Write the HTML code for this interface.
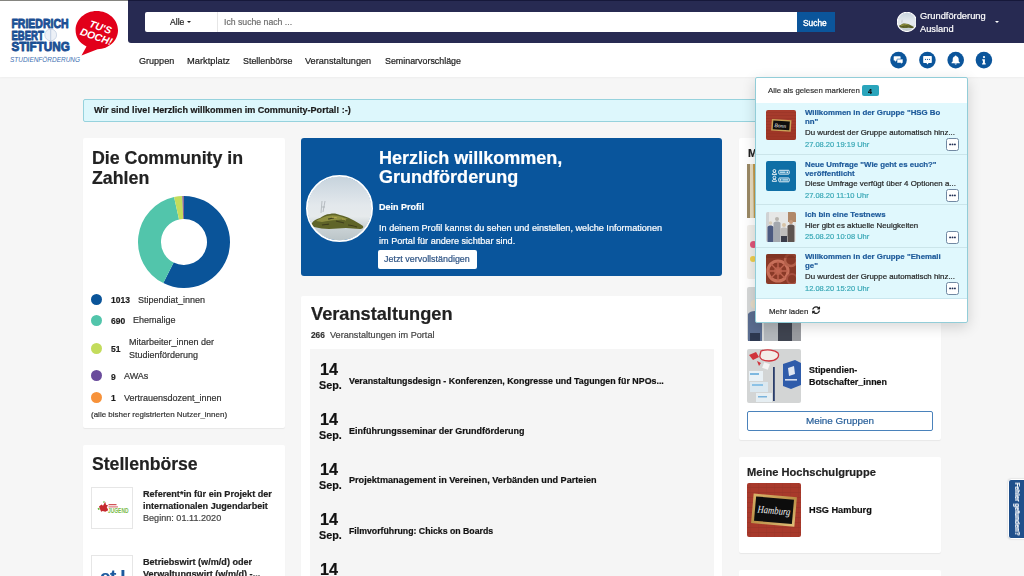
<!DOCTYPE html>
<html><head><meta charset="utf-8"><style>
html,body{margin:0;padding:0}
body{width:1024px;height:576px;overflow:hidden;position:relative;background:#f6f6f6;font-family:"Liberation Sans",sans-serif}
.r{position:absolute}
.t{position:absolute;white-space:nowrap;will-change:transform;-webkit-text-stroke:0.2px currentColor}
</style></head><body>
<div class="r" style="left:0px;top:0px;width:1024px;height:77px;background:#fff;box-shadow:0 1px 2px rgba(0,0,0,.035)"></div>
<div class="r" style="left:0px;top:0px;width:1024px;height:1px;background:#858580"></div>
<div class="r" style="left:128px;top:0px;width:896px;height:43px;background:#272a52;border-bottom-left-radius:3px"></div>
<div class="r" style="left:128px;top:0px;width:896px;height:1px;background:#16183a"></div>
<div class="r" style="left:145px;top:12px;width:652px;height:20px;background:#fff;border-radius:2px 0 0 2px"></div>
<div class="r" style="left:217px;top:12px;width:1px;height:20px;background:#e6e6e6"></div>
<div class="t " style="left:170.2px;top:17.26px;font-size:8.6px;line-height:10.32px;color:#1e1e1e;font-weight:normal;">Alle</div>
<div class="r" style="left:187px;top:20.8px;width:0;height:0;border-left:2.6px solid transparent;border-right:2.6px solid transparent;border-top:2.8px solid #222"></div>
<div class="t " style="left:224px;top:17.37px;font-size:8.7px;line-height:10.44px;color:#6e6e6e;font-weight:normal;">Ich suche nach ...</div>
<div class="r" style="left:797px;top:12px;width:38px;height:20px;background:#0b559b"></div>
<div class="t " style="left:803.4px;top:18.05px;font-size:8.4px;line-height:10.08px;color:#fff;font-weight:normal;-webkit-text-stroke:0.4px #fff">Suche</div>
<svg class="r" style="left:896.5px;top:12.4px" width="19.8" height="19.8" viewBox="0 0 67 67"><defs><clipPath id="av2"><circle cx="33.5" cy="33.5" r="32"/></clipPath><linearGradient id="sky2" x1="0" y1="0" x2="0" y2="1"><stop offset="0" stop-color="#c5d2dc"/><stop offset=".45" stop-color="#e3e8ec"/><stop offset=".62" stop-color="#e6eaec"/><stop offset=".75" stop-color="#cdd5d8"/><stop offset="1" stop-color="#b9c3c6"/></linearGradient></defs><g clip-path="url(#av2)"><rect width="67" height="67" fill="url(#sky2)"/><path d="M6 48c2-3 5-4 8-5 3-2 6-4 10-4 4-1 7 0 10 1 4 1 8 2 11 4 4 2 8 4 12 7 1 2-1 3-3 3-5 0-9-1-14-1-6 0-11 1-17 1-5 0-10-1-15-2-2-1-3-2-2-4z" fill="#5f6428"/><path d="M10 46c3-2 7-4 11-5 4-1 8-1 12 0 3 1 6 2 9 3-4 0-7 1-11 1-5 0-10 1-15 2z" fill="#8f9040"/><path d="M16 50c3-1 5 0 7-1M30 46c3 1 5 1 8 2M42 50c3 0 6 1 9 2M22 44c2 0 4-1 6-1" stroke="#3f3e1c" stroke-width="1.1" fill="none"/><path d="M26 42c2 1 4 0 5 1M36 44c2 0 3 1 4 1" stroke="#b4a950" stroke-width=".9" fill="none"/><path d="M15 38l1-12M17 37l2-11M16 32l3 0" stroke="#8a9096" stroke-width=".5" fill="none"/></g><circle cx="33.5" cy="33.5" r="32.6" fill="none" stroke="#fff" stroke-width="3.6"/></svg>
<div class="t " style="left:920px;top:10.80px;font-size:9.3px;line-height:11.16px;color:#fff;font-weight:normal;">Grundförderung</div>
<div class="t " style="left:920px;top:23.60px;font-size:9.3px;line-height:11.16px;color:#fff;font-weight:normal;">Ausland</div>
<div class="r" style="left:994.5px;top:21px;width:0;height:0;border-left:2.8px solid transparent;border-right:2.8px solid transparent;border-top:2.8px solid #fff"></div>
<svg class="r" style="left:0;top:0" width="128" height="77" viewBox="0 0 128 77">
<g fill="#1b4f94" stroke="#1b4f94" stroke-width="0.9" stroke-linejoin="round" font-family="Liberation Sans" font-weight="bold">
<text x="11.4" y="28.2" font-size="13" textLength="57.2" lengthAdjust="spacingAndGlyphs">FRIEDRICH</text>
<text x="11.4" y="39.8" font-size="13" textLength="32.4" lengthAdjust="spacingAndGlyphs">EBERT</text>
<text x="11.4" y="51.4" font-size="13" textLength="58.4" lengthAdjust="spacingAndGlyphs">STIFTUNG</text>
</g>
<circle cx="50.7" cy="34.9" r="5.9" fill="#edf1f7" stroke="#c3cfe2" stroke-width="0.8"/>
<path d="M50.7 29.2v11.5" stroke="#a9bcd8" stroke-width="0.7" fill="none"/>
<text x="10" y="62" font-family="Liberation Sans" font-size="6.4" font-style="italic" fill="#4070b2" textLength="70" lengthAdjust="spacingAndGlyphs">STUDIENFÖRDERUNG</text>
<path d="M96.7 11 C108.5 11 118 19.6 118 30.2 C118 40.5 109 49 97.5 49.2 L81.5 55.6 L86.5 46.5 C79.5 43 75.6 37 75.6 30.2 C75.6 19.6 84.9 11 96.7 11Z" fill="#e2001a"/>
<g fill="#fff" font-family="Liberation Sans" font-weight="bold" font-style="italic" font-size="10.2">
<text transform="translate(88.5 26.8) rotate(19)">TU'S</text>
<text transform="translate(79.4 34.6) rotate(19)">DOCH!</text>
</g>
</svg>

<div class="t " style="left:138.8px;top:56.03px;font-size:9.05px;line-height:10.86px;color:#1c1c1c;font-weight:normal;">Gruppen</div>
<div class="t " style="left:187.1px;top:55.80px;font-size:9.3px;line-height:11.16px;color:#1c1c1c;font-weight:normal;">Marktplatz</div>
<div class="t " style="left:243px;top:56.16px;font-size:8.92px;line-height:10.7px;color:#1c1c1c;font-weight:normal;">Stellenbörse</div>
<div class="t " style="left:305.3px;top:55.92px;font-size:9.17px;line-height:11.0px;color:#1c1c1c;font-weight:normal;">Veranstaltungen</div>
<div class="t " style="left:385px;top:56.18px;font-size:8.89px;line-height:10.67px;color:#1c1c1c;font-weight:normal;">Seminarvorschläge</div>
<svg class="r" style="left:880px;top:45px" width="120" height="30" viewBox="880 45 120 30">
<g fill="#0b559b">
<circle cx="898.5" cy="60.1" r="8.3"/>
<circle cx="927.4" cy="60.1" r="8.3"/>
<circle cx="955.7" cy="60.1" r="8.3"/>
<circle cx="983.9" cy="60.1" r="8.3"/>
</g>
<g fill="#fff">
<path d="M894.3 56.3h5.7a.6.6 0 0 1 .6.6v3a.6.6 0 0 1-.6.6h-3.3l-1.6 1.2v-1.2h-.8a.6.6 0 0 1-.6-.6v-3a.6.6 0 0 1 .6-.6z"/>
<path d="M897.6 59.1h4.8a.6.6 0 0 1 .6.6v2.8a.6.6 0 0 1-.6.6h-.4v1.1l-1.5-1.1h-2.9a.6.6 0 0 1-.6-.6v-2.8a.6.6 0 0 1 .6-.6z" stroke="#0b559b" stroke-width="0.6"/>
<path d="M923.8 55.9h7.4a.6.6 0 0 1 .6.6v5.8a.6.6 0 0 1-.6.6h-2.6l-1.1 1.5-1.1-1.5h-2.6a.6.6 0 0 1-.6-.6v-5.8a.6.6 0 0 1 .6-.6z"/>
<path d="M955.7 55.6c.5 0 .8.3.8.6 1.6.4 2.2 1.7 2.2 3.4v1.6l1.2 1.6v.4h-8.4v-.4l1.2-1.6v-1.6c0-1.7.6-3 2.2-3.4 0-.3.3-.6.8-.6z"/>
<path d="M954.6 63.6h2.2c0 .6-.5 1-1.1 1s-1.1-.4-1.1-1z"/>
<circle cx="984" cy="57.1" r="1.1"/>
<path d="M982.2 59.3h2.7v3.9h.8v1.3h-3.6v-1.3h.8v-2.6h-.7z"/>
</g>
<g fill="#0b559b">
<circle cx="925.5" cy="59.3" r="0.6"/><circle cx="927.5" cy="59.3" r="0.6"/><circle cx="929.5" cy="59.3" r="0.6"/>
</g>
</svg>

<div class="r" style="left:83px;top:98.5px;width:858px;height:23px;background:#ddf7fc;border:1px solid #96d2dd;border-radius:2px;box-sizing:border-box"></div>
<div class="t " style="left:94px;top:105.03px;font-size:9.05px;line-height:10.86px;color:#1b1b1b;font-weight:bold;">Wir sind live! Herzlich willkommen im Community-Portal! :-)</div>
<div class="r" style="left:83px;top:138px;width:202px;height:290px;background:#fff;border-radius:2px;box-shadow:0 1px 1px rgba(0,0,0,.06)"></div>
<div class="t " style="left:92.3px;top:147.55px;font-size:17.8px;line-height:21.36px;color:#222;font-weight:bold;">Die Community in</div>
<div class="t " style="left:92.3px;top:167.65px;font-size:17.8px;line-height:21.36px;color:#222;font-weight:bold;">Zahlen</div>
<svg class="r" style="left:0;top:0" width="1024" height="576" viewBox="0 0 1024 576"><path d="M184.00 196.00A46 46 0 1 1 163.31 283.08L173.65 262.54A23 23 0 1 0 184.00 219.00Z" fill="#0a5499"/><path d="M163.31 283.08A46 46 0 0 1 174.08 197.08L179.04 219.54A23 23 0 0 0 173.65 262.54Z" fill="#52c5ab"/><path d="M174.08 197.08A46 46 0 0 1 182.36 196.03L183.18 219.01A23 23 0 0 0 179.04 219.54Z" fill="#c3dc5c"/><path d="M182.36 196.03A46 46 0 0 1 183.84 196.00L183.92 219.00A23 23 0 0 0 183.18 219.01Z" fill="#6a4c9c"/><path d="M183.84 196.00A46 46 0 0 1 184.00 196.00L184.00 219.00A23 23 0 0 0 183.92 219.00Z" fill="#f7923a"/></svg>
<div class="r" style="left:91px;top:293.8px;width:11px;height:11px;background:#0a5499;border-radius:50%"></div>
<div class="t " style="left:111px;top:295.05px;font-size:8.5px;line-height:10.2px;color:#1e1e1e;font-weight:bold;">1013</div>
<div class="t " style="left:137.7px;top:294.58px;font-size:9px;line-height:10.8px;color:#333;font-weight:normal;">Stipendiat_innen</div>
<div class="r" style="left:91px;top:314.6px;width:11px;height:11px;background:#52c5ab;border-radius:50%"></div>
<div class="t " style="left:111px;top:315.85px;font-size:8.5px;line-height:10.2px;color:#1e1e1e;font-weight:bold;">690</div>
<div class="t " style="left:133.3px;top:315.38px;font-size:9px;line-height:10.8px;color:#333;font-weight:normal;">Ehemalige</div>
<div class="r" style="left:91px;top:342.5px;width:11px;height:11px;background:#c3dc5c;border-radius:50%"></div>
<div class="t " style="left:111px;top:343.75px;font-size:8.5px;line-height:10.2px;color:#1e1e1e;font-weight:bold;">51</div>
<div class="t" style="left:128.6px;top:336.43px;font-size:9px;line-height:12.5px;color:#333;font-weight:normal;">Mitarbeiter_innen der<br>Studienförderung</div>
<div class="r" style="left:91px;top:370.3px;width:11px;height:11px;background:#6a4c9c;border-radius:50%"></div>
<div class="t " style="left:111px;top:371.55px;font-size:8.5px;line-height:10.2px;color:#1e1e1e;font-weight:bold;">9</div>
<div class="t " style="left:123.8px;top:371.08px;font-size:9px;line-height:10.8px;color:#333;font-weight:normal;">AWAs</div>
<div class="r" style="left:91px;top:391.8px;width:11px;height:11px;background:#f7923a;border-radius:50%"></div>
<div class="t " style="left:111px;top:393.05px;font-size:8.5px;line-height:10.2px;color:#1e1e1e;font-weight:bold;">1</div>
<div class="t " style="left:123.8px;top:392.58px;font-size:9px;line-height:10.8px;color:#333;font-weight:normal;">Vertrauensdozent_innen</div>
<div class="t " style="left:91.2px;top:409.63px;font-size:8.0px;line-height:9.6px;color:#333;font-weight:normal;">(alle bisher registrierten Nutzer_innen)</div>
<div class="r" style="left:83px;top:445px;width:202px;height:140px;background:#fff;border-radius:2px;box-shadow:0 1px 1px rgba(0,0,0,.06)"></div>
<div class="t " style="left:91.7px;top:454.34px;font-size:17.6px;line-height:21.12px;color:#222;font-weight:bold;">Stellenbörse</div>
<div class="r" style="left:91px;top:487px;width:42px;height:42px;background:#fff;border:1px solid #e6e6e6;box-sizing:border-box"></div>
<svg class="r" style="left:91px;top:487px" width="42" height="42" viewBox="0 0 42 42">
<path d="M8 19.5l2.5-2 1.5 1.2 2.2-4 .8 3 2.2.8-1.5 1.5 1.6 3.2-3 1.6-2.6-.8-1.6.8z" fill="#c62a2e"/>
<path d="M6.5 21.5l1.6-.8.8 1.5-1.5.8z M12 15l1-1 .9 1-1 1z" fill="#6ab23a"/>
<rect x="17.5" y="17.2" width="8" height="1" fill="#c62a2e"/>
<rect x="17.5" y="19.4" width="9.5" height="1" fill="#c62a2e" opacity=".75"/>
<text x="17" y="26.3" font-family="Liberation Sans" font-weight="bold" font-size="6.3" fill="#78bb48" textLength="20.5" lengthAdjust="spacingAndGlyphs">JUGEND</text>
</svg>

<div class="t" style="left:142.6px;top:487.50px;font-size:9.1px;line-height:12.3px;color:#222;font-weight:bold;">Referent*in für ein Projekt der<br>internationalen Jugendarbeit</div>
<div class="t " style="left:142.6px;top:513.19px;font-size:9.1px;line-height:10.92px;color:#444;font-weight:normal;">Beginn: 01.11.2020</div>
<div class="r" style="left:91px;top:555px;width:42px;height:42px;background:#fff;border:1px solid #e6e6e6;box-sizing:border-box"></div>
<div class="t " style="left:99.5px;top:565.52px;font-size:19px;line-height:22.8px;color:#1d5a9e;font-weight:bold;letter-spacing:-0.6px">et.l</div>
<div class="t" style="left:142.6px;top:555.50px;font-size:9.1px;line-height:12.3px;color:#222;font-weight:bold;">Betriebswirt (w/m/d) oder<br>Verwaltungswirt (w/m/d) -...</div>
<div class="r" style="left:301px;top:138px;width:421px;height:138px;background:#09559c;border-radius:3px"></div>
<svg class="r" style="left:306px;top:174.5px" width="67" height="67" viewBox="0 0 67 67"><defs><clipPath id="av"><circle cx="33.5" cy="33.5" r="32"/></clipPath><linearGradient id="sky" x1="0" y1="0" x2="0" y2="1"><stop offset="0" stop-color="#c5d2dc"/><stop offset=".45" stop-color="#e3e8ec"/><stop offset=".62" stop-color="#e6eaec"/><stop offset=".75" stop-color="#cdd5d8"/><stop offset="1" stop-color="#b9c3c6"/></linearGradient></defs><g clip-path="url(#av)"><rect width="67" height="67" fill="url(#sky)"/><path d="M6 48c2-3 5-4 8-5 3-2 6-4 10-4 4-1 7 0 10 1 4 1 8 2 11 4 4 2 8 4 12 7 1 2-1 3-3 3-5 0-9-1-14-1-6 0-11 1-17 1-5 0-10-1-15-2-2-1-3-2-2-4z" fill="#5f6428"/><path d="M10 46c3-2 7-4 11-5 4-1 8-1 12 0 3 1 6 2 9 3-4 0-7 1-11 1-5 0-10 1-15 2z" fill="#8f9040"/><path d="M16 50c3-1 5 0 7-1M30 46c3 1 5 1 8 2M42 50c3 0 6 1 9 2M22 44c2 0 4-1 6-1" stroke="#3f3e1c" stroke-width="1.1" fill="none"/><path d="M26 42c2 1 4 0 5 1M36 44c2 0 3 1 4 1" stroke="#b4a950" stroke-width=".9" fill="none"/><path d="M15 38l1-12M17 37l2-11M16 32l3 0" stroke="#8a9096" stroke-width=".5" fill="none"/></g><circle cx="33.5" cy="33.5" r="32.6" fill="none" stroke="#fff" stroke-width="1.8"/></svg>
<div class="t " style="left:378.7px;top:147.52px;font-size:18.05px;line-height:21.66px;color:#fff;font-weight:bold;">Herzlich willkommen,</div>
<div class="t " style="left:378.7px;top:167.22px;font-size:18.05px;line-height:21.66px;color:#fff;font-weight:bold;">Grundförderung</div>
<div class="t " style="left:378.5px;top:201.98px;font-size:9px;line-height:10.8px;color:#fff;font-weight:bold;">Dein Profil</div>
<div class="t " style="left:378.5px;top:222.97px;font-size:9.12px;line-height:10.94px;color:#fff;font-weight:normal;">In deinem Profil kannst du sehen und einstellen, welche Informationen</div>
<div class="t " style="left:378.5px;top:235.67px;font-size:9.12px;line-height:10.94px;color:#fff;font-weight:normal;">im Portal für andere sichtbar sind.</div>
<div class="r" style="left:378px;top:250px;width:99px;height:19px;background:#fff;border-radius:2px"></div>
<div class="t " style="left:384.4px;top:254.24px;font-size:8.94px;line-height:10.73px;color:#2c5283;font-weight:normal;">Jetzt vervollständigen</div>
<div class="r" style="left:301px;top:295.5px;width:421px;height:300px;background:#fff;border-radius:2px;box-shadow:0 1px 1px rgba(0,0,0,.06)"></div>
<div class="t " style="left:310.5px;top:303.77px;font-size:18.2px;line-height:21.84px;color:#222;font-weight:bold;">Veranstaltungen</div>
<div class="t " style="left:310.5px;top:330.54px;font-size:8.3px;line-height:9.96px;color:#333;font-weight:bold;">266</div>
<div class="t " style="left:330.2px;top:329.74px;font-size:9.15px;line-height:10.98px;color:#444;font-weight:normal;">Veranstaltungen im Portal</div>
<div class="r" style="left:310px;top:349.3px;width:404px;height:260px;background:#f5f5f5"></div>
<div class="t " style="left:320.4px;top:360.37px;font-size:16.2px;line-height:19.44px;color:#111;font-weight:bold;">14</div>
<div class="t " style="left:318.5px;top:378.58px;font-size:10.8px;line-height:12.96px;color:#111;font-weight:bold;">Sep.</div>
<div class="t " style="left:349.3px;top:375.62px;font-size:8.86px;line-height:10.63px;color:#111;font-weight:bold;">Veranstaltungsdesign - Konferenzen, Kongresse und Tagungen für NPOs...</div>
<div class="t " style="left:320.4px;top:410.37px;font-size:16.2px;line-height:19.44px;color:#111;font-weight:bold;">14</div>
<div class="t " style="left:318.5px;top:428.58px;font-size:10.8px;line-height:12.96px;color:#111;font-weight:bold;">Sep.</div>
<div class="t " style="left:349.3px;top:425.50px;font-size:8.98px;line-height:10.78px;color:#111;font-weight:bold;">Einführungsseminar der Grundförderung</div>
<div class="t " style="left:320.4px;top:460.37px;font-size:16.2px;line-height:19.44px;color:#111;font-weight:bold;">14</div>
<div class="t " style="left:318.5px;top:478.58px;font-size:10.8px;line-height:12.96px;color:#111;font-weight:bold;">Sep.</div>
<div class="t " style="left:349.3px;top:475.37px;font-size:9.12px;line-height:10.94px;color:#111;font-weight:bold;">Projektmanagement in Vereinen, Verbänden und Parteien</div>
<div class="t " style="left:320.4px;top:510.37px;font-size:16.2px;line-height:19.44px;color:#111;font-weight:bold;">14</div>
<div class="t " style="left:318.5px;top:528.58px;font-size:10.8px;line-height:12.96px;color:#111;font-weight:bold;">Sep.</div>
<div class="t " style="left:349.3px;top:525.73px;font-size:8.74px;line-height:10.49px;color:#111;font-weight:bold;">Filmvorführung: Chicks on Boards</div>
<div class="t " style="left:320.4px;top:560.37px;font-size:16.2px;line-height:19.44px;color:#111;font-weight:bold;">14</div>
<div class="r" style="left:739px;top:138px;width:202px;height:302px;background:#fff;border-radius:2px;box-shadow:0 1px 1px rgba(0,0,0,.06)"></div>
<div class="t " style="left:747.5px;top:147.09px;font-size:11px;line-height:13.2px;color:#222;font-weight:bold;">Meine Gruppen</div>
<svg class="r" style="left:747px;top:164px" width="54" height="54" viewBox="0 0 54 54"><rect width="54" height="54" rx="2" fill="#d9cdb0"/><rect x="0" y="0" width="3" height="54" fill="#9b8a66"/><path d="M3 0h4l-1 54H3z" fill="#e8dcc0"/><path d="M6 0h3l2 54H7z" fill="#c29a4a"/><path d="M9 0h2l3 54h-2z" fill="#7e6438"/><rect x="14" y="0" width="40" height="54" fill="#d2c6aa"/></svg>
<div class="r" style="left:747px;top:225px;width:54px;height:54px;border-radius:2px;background:#f1efeb"></div>
<div class="r" style="left:750px;top:241px;width:7px;height:7px;border-radius:50%;background:#e0557a"></div>
<div class="r" style="left:750px;top:256px;width:6px;height:6px;border-radius:50%;background:#efcf4f"></div>
<svg class="r" style="left:747px;top:287px" width="54" height="54" viewBox="0 0 54 54"><rect width="54" height="54" rx="2" fill="#d6d8d8"/><rect x="20" y="0" width="34" height="20" fill="#e2e3e2"/><circle cx="8" cy="17" r="4.5" fill="#e6dcc8"/><path d="M1 27c2-4 12-4 14 0v27H1z" fill="#5b6d90"/><rect x="3" y="46" width="10" height="8" fill="#2d3850"/><circle cx="24" cy="22" r="3.5" fill="#c9bba8"/><path d="M17 30c2-3 12-3 14 0v24H17z" fill="#b4b8bc"/><circle cx="38" cy="20" r="3.5" fill="#b89a80"/><path d="M31 27c2-3 12-3 14 0v27H31z" fill="#3f4450"/><rect x="45" y="24" width="9" height="30" fill="#9a9ca0"/></svg>
<svg class="r" style="left:747px;top:349px" width="54" height="54" viewBox="0 0 54 54"><rect width="54" height="54" rx="2" fill="#d3d5d5"/><path d="M2 6l7-3 3 5-6 3z" fill="#d0343c"/><path d="M14 2c6-2 14-1 17 2 2 4-2 8-9 8-6 0-10-2-9-6z" fill="#f3eee8" stroke="#d0343c" stroke-width="1.3"/><path d="M10 12l4 2-2 3z" fill="#d0343c"/><rect x="16" y="14" width="6" height="6" fill="#f4f4f4" transform="rotate(20 19 17)"/><rect x="2" y="22" width="14" height="10" fill="#e9f1f6"/><rect x="3" y="24" width="9" height="2" fill="#7db8e0"/><rect x="3" y="33" width="18" height="10" fill="#dbe8f0"/><rect x="5" y="35" width="11" height="2" fill="#8cc2e6"/><rect x="9" y="44" width="16" height="9" fill="#e6eef2"/><rect x="11" y="47" width="9" height="1.5" fill="#7ab3dc"/><rect x="26" y="18" width="1.8" height="34" fill="#2a3e6b"/><path d="M36 15l12-4 6 3v22l-10 4-8-3z" fill="#2f5caa"/><path d="M41 19l6-2 1 8-6 2z" fill="#fff" opacity=".85"/><rect x="38" y="30" width="12" height="1.6" fill="#fff" opacity=".8"/></svg>
<div class="t" style="left:809.2px;top:364.47px;font-size:8.9px;line-height:12.3px;color:#111;font-weight:bold;">Stipendien-<br>Botschafter_innen</div>
<div class="r" style="left:747px;top:411px;width:186px;height:20px;border:1px solid #4a82bb;border-radius:2px;box-sizing:border-box;background:#fff"></div>
<div class="t" style="left:747px;width:186px;text-align:center;top:414.87px;font-size:9.9px;line-height:12px;color:#255d98;-webkit-text-stroke:0.2px #255d98">Meine Gruppen</div>
<div class="r" style="left:739px;top:457px;width:202px;height:96px;background:#fff;border-radius:2px;box-shadow:0 1px 1px rgba(0,0,0,.06)"></div>
<div class="t " style="left:747.3px;top:466.29px;font-size:11.1px;line-height:13.32px;color:#222;font-weight:bold;">Meine Hochschulgruppe</div>
<svg class="r" style="left:747px;top:483px" width="54" height="54" viewBox="0 0 54 54">
<defs><pattern id="brk" width="8" height="5" patternUnits="userSpaceOnUse"><rect width="8" height="5" fill="#a8392b"/><rect x="0" y="4.4" width="8" height=".6" fill="#8a3024" opacity=".6"/><rect x="3.5" y="0" width=".6" height="4.4" fill="#8e3226" opacity=".5"/></pattern>
<linearGradient id="gold" x1="0" y1="0" x2="1" y2="1"><stop offset="0" stop-color="#d9b46a"/><stop offset=".5" stop-color="#b98e45"/><stop offset="1" stop-color="#e0c07a"/></linearGradient></defs>
<rect width="54" height="54" rx="2" fill="url(#brk)"/>
<g transform="rotate(5 27 27.2)">
<rect x="5.3" y="12.4" width="43.4" height="29.6" fill="url(#gold)"/>
<rect x="8" y="15" width="38" height="24.4" fill="#0d0d0d"/>
<text x="10.5" y="31" font-family="Liberation Serif" font-style="italic" font-size="10.5" fill="#f2f2f2" textLength="33" lengthAdjust="spacingAndGlyphs">Hamburg</text>
</g>
</svg>

<div class="t " style="left:809.4px;top:504.89px;font-size:9.2px;line-height:11.04px;color:#111;font-weight:bold;">HSG Hamburg</div>
<div class="r" style="left:739px;top:569.5px;width:202px;height:20px;background:#fff;border-radius:2px"></div>
<div class="r" style="left:1008px;top:479px;width:18px;height:60px;background:#1f4f8b;border:1px solid #fff;border-radius:3px 0 0 3px;box-sizing:border-box;box-shadow:0 0 2px rgba(0,0,0,.2)"></div>
<div class="t" style="left:1016.5px;top:509px;font-size:6.3px;line-height:8px;color:#fff;font-weight:bold;transform:translate(-50%,-50%) rotate(90deg);white-space:nowrap">Fehler gefunden?</div>
<div class="r" style="left:755px;top:77px;width:213px;height:246px;background:#fff;border:1px solid #92cdd8;border-radius:2px;box-sizing:border-box;box-shadow:0 4px 14px rgba(0,0,0,.16)"></div>
<div class="t " style="left:768px;top:86.18px;font-size:7.84px;line-height:9.41px;color:#333;font-weight:normal;">Alle als gelesen markieren</div>
<div class="r" style="left:862px;top:85px;width:17px;height:11px;background:#2aa5bc;border-radius:2px"></div>
<div class="t " style="left:868.3px;top:87.77px;font-size:7px;line-height:8.4px;color:#111;font-weight:bold;">4</div>
<div class="r" style="left:756px;top:103px;width:211px;height:51.400000000000006px;background:#e0f8fd"></div>
<div class="t" style="left:804.9px;top:108.18px;font-size:7.85px;line-height:9px;color:#1d5a9a;font-weight:bold;">Willkommen in der Gruppe "HSG Bo<br>nn"</div>
<div class="t " style="left:804.9px;top:127.82px;font-size:7.9px;line-height:9.48px;color:#1f1f1f;font-weight:normal;">Du wurdest der Gruppe automatisch hinz...</div>
<div class="t " style="left:804.9px;top:139.50px;font-size:7.5px;line-height:9.0px;color:#3aa8b6;font-weight:normal;">27.08.20 19:19 Uhr</div>
<svg class="r" style="left:946px;top:138px" width="13" height="13" viewBox="0 0 13 13"><rect x=".5" y=".5" width="12" height="12" rx="2" fill="#fff" stroke="#7189a3"/><g fill="#1d2c52"><circle cx="4.1" cy="6.4" r=".95"/><circle cx="6.5" cy="6.4" r=".95"/><circle cx="8.9" cy="6.4" r=".95"/></g></svg>
<div class="r" style="left:766px;top:110px;width:30px;height:30px;border-radius:2px;overflow:hidden"><svg width="30" height="30" viewBox="0 0 30 30"><defs><pattern id="bb" width="5" height="3" patternUnits="userSpaceOnUse"><rect width="5" height="3" fill="#a63b2c"/><rect y="2.6" width="5" height=".4" fill="#83291f" opacity=".6"/></pattern></defs><rect width="30" height="30" fill="url(#bb)"/><rect y="19" width="30" height="11" fill="#96321f" opacity=".5"/><g transform="rotate(4 15.3 15.4)"><rect x="5.5" y="9.6" width="19.6" height="11.6" fill="#c9a257"/><rect x="7" y="11" width="16.6" height="8.8" fill="#0e0e0e"/><text x="8.5" y="17.6" font-family="Liberation Serif" font-style="italic" font-size="5.5" fill="#eee">Bonn</text></g></svg></div>
<div class="r" style="left:756px;top:154.4px;width:211px;height:50.29999999999998px;background:#e0f8fd"></div>
<div class="r" style="left:756px;top:153.9px;width:211px;height:1px;background:#cbe5ea"></div>
<div class="t" style="left:804.9px;top:159.58px;font-size:7.85px;line-height:9px;color:#1d5a9a;font-weight:bold;">Neue Umfrage "Wie geht es euch?"<br>veröffentlicht</div>
<div class="t " style="left:804.9px;top:179.22px;font-size:7.9px;line-height:9.48px;color:#1f1f1f;font-weight:normal;">Diese Umfrage verfügt über 4 Optionen a...</div>
<div class="t " style="left:804.9px;top:190.90px;font-size:7.5px;line-height:9.0px;color:#3aa8b6;font-weight:normal;">27.08.20 11:10 Uhr</div>
<svg class="r" style="left:946px;top:188.5px" width="13" height="13" viewBox="0 0 13 13"><rect x=".5" y=".5" width="12" height="12" rx="2" fill="#fff" stroke="#7189a3"/><g fill="#1d2c52"><circle cx="4.1" cy="6.4" r=".95"/><circle cx="6.5" cy="6.4" r=".95"/><circle cx="8.9" cy="6.4" r=".95"/></g></svg>
<div class="r" style="left:766px;top:161.4px;width:30px;height:30px;border-radius:2px;overflow:hidden"><svg width="30" height="30" viewBox="0 0 30 30"><rect width="30" height="30" fill="#0f6fa6"/><g fill="none" stroke="#fff" stroke-width=".9"><circle cx="8.4" cy="9.9" r="1.4"/><path d="M6.3 13.6c0-1.3.9-2 2.1-2s2.1.7 2.1 2z"/><circle cx="8.4" cy="16.6" r="1.4"/><path d="M6.3 20.3c0-1.3.9-2 2.1-2s2.1.7 2.1 2z"/><rect x="12.8" y="9.3" width="10.4" height="3.8" rx=".8"/><rect x="12.8" y="17" width="10.4" height="3.8" rx=".8"/></g><rect x="14" y="10.5" width="5.5" height="1.4" fill="#bfe3f3"/><rect x="20.5" y="10.5" width="1.5" height="1.4" fill="#fff"/><rect x="14" y="18.2" width="1.4" height="1.4" fill="#fff"/><rect x="16.3" y="18.2" width="5.7" height="1.4" fill="#bfe3f3"/></svg></div>
<div class="r" style="left:756px;top:204.7px;width:211px;height:42.5px;background:#e0f8fd"></div>
<div class="r" style="left:756px;top:204.2px;width:211px;height:1px;background:#cbe5ea"></div>
<div class="t" style="left:804.9px;top:209.88px;font-size:7.85px;line-height:9px;color:#1d5a9a;font-weight:bold;">Ich bin eine Testnews</div>
<div class="t " style="left:804.9px;top:220.52px;font-size:7.9px;line-height:9.48px;color:#1f1f1f;font-weight:normal;">Hier gibt es aktuelle Neuigkeiten</div>
<div class="t " style="left:804.9px;top:232.20px;font-size:7.5px;line-height:9.0px;color:#3aa8b6;font-weight:normal;">25.08.20 10:08 Uhr</div>
<svg class="r" style="left:946px;top:230.5px" width="13" height="13" viewBox="0 0 13 13"><rect x=".5" y=".5" width="12" height="12" rx="2" fill="#fff" stroke="#7189a3"/><g fill="#1d2c52"><circle cx="4.1" cy="6.4" r=".95"/><circle cx="6.5" cy="6.4" r=".95"/><circle cx="8.9" cy="6.4" r=".95"/></g></svg>
<div class="r" style="left:766px;top:211.7px;width:30px;height:30px;border-radius:2px;overflow:hidden"><svg width="30" height="30" viewBox="0 0 30 30"><rect width="30" height="30" fill="#e6e7e6"/><rect x="22" y="0" width="8" height="10" fill="#b08868"/><rect x="0" y="0" width="3" height="30" fill="#cfd2d4"/><circle cx="4.5" cy="11" r="1.8" fill="#d8ccb8"/><path d="M1.5 15c1-2 5-2 6 0v15h-6z" fill="#4c5a80"/><circle cx="11" cy="7" r="2" fill="#b8b4ae"/><path d="M7.5 11c1-2 6-2 7 0v19h-7z" fill="#a4a8ae"/><circle cx="18" cy="13" r="2" fill="#d8c4a8"/><path d="M14.5 17c1-2 6-2 7 0v8h-7z" fill="#c0bebc"/><rect x="15" y="24" width="6" height="6" fill="#3a3c48"/><circle cx="25" cy="10" r="2" fill="#c49a7c"/><path d="M21.5 14c1-2 6-2 7 0v16h-7z" fill="#5e5450"/></svg></div>
<div class="r" style="left:756px;top:247.2px;width:211px;height:50.80000000000001px;background:#e0f8fd"></div>
<div class="r" style="left:756px;top:246.7px;width:211px;height:1px;background:#cbe5ea"></div>
<div class="t" style="left:804.9px;top:252.38px;font-size:7.85px;line-height:9px;color:#1d5a9a;font-weight:bold;">Willkommen in der Gruppe "Ehemali<br>ge"</div>
<div class="t " style="left:804.9px;top:272.02px;font-size:7.9px;line-height:9.48px;color:#1f1f1f;font-weight:normal;">Du wurdest der Gruppe automatisch hinz...</div>
<div class="t " style="left:804.9px;top:283.70px;font-size:7.5px;line-height:9.0px;color:#3aa8b6;font-weight:normal;">12.08.20 15:20 Uhr</div>
<svg class="r" style="left:946px;top:282px" width="13" height="13" viewBox="0 0 13 13"><rect x=".5" y=".5" width="12" height="12" rx="2" fill="#fff" stroke="#7189a3"/><g fill="#1d2c52"><circle cx="4.1" cy="6.4" r=".95"/><circle cx="6.5" cy="6.4" r=".95"/><circle cx="8.9" cy="6.4" r=".95"/></g></svg>
<div class="r" style="left:766px;top:254.2px;width:30px;height:30px;border-radius:2px;overflow:hidden"><svg width="30" height="30" viewBox="0 0 30 30"><rect width="30" height="30" fill="#8a3a28"/><circle cx="12" cy="17" r="10" fill="none" stroke="#c8705a" stroke-width="3"/><circle cx="12" cy="17" r="4" fill="#b05a44"/><path d="M12 7v20M2 17h20M5 10l14 14M19 10L5 24" stroke="#c06450" stroke-width="1.4"/><circle cx="25" cy="6" r="6" fill="none" stroke="#b4604a" stroke-width="2.5"/><circle cx="26" cy="25" r="5" fill="none" stroke="#a65040" stroke-width="2"/><rect x="0" y="0" width="30" height="4" fill="#7a3020" opacity=".6"/></svg></div>
<div class="r" style="left:756px;top:298px;width:211px;height:1px;background:#c9e6ee"></div>
<div class="t " style="left:768.6px;top:306.86px;font-size:7.86px;line-height:9.43px;color:#2a2a2a;font-weight:normal;">Mehr laden</div>
<svg class="r" style="left:812.4px;top:306.3px" width="8.2" height="8.2" viewBox="0 0 512 512"><path fill="#222" d="M370.72 133.28C339.458 104.008 298.888 87.962 255.848 88c-77.458.068-144.328 53.178-162.791 126.85-1.344 5.363-6.122 9.15-11.651 9.15H24.103c-7.498 0-13.194-6.807-11.807-14.176C33.933 94.924 134.813 8 256 8c66.448 0 126.791 26.136 171.315 68.685L463.03 40.97C478.149 25.851 504 36.559 504 57.941V192c0 13.255-10.745 24-24 24H345.941c-21.382 0-32.09-25.851-16.971-40.971l41.75-41.749zM32 296h134.059c21.382 0 32.09 25.851 16.971 40.971l-41.75 41.75c31.262 29.273 71.835 45.319 114.876 45.28 77.418-.07 144.315-53.144 162.787-126.849 1.344-5.363 6.122-9.150 11.651-9.150h57.304c7.498 0 13.194 6.807 11.807 14.176C478.067 417.076 377.187 504 256 504c-66.448 0-126.791-26.136-171.315-68.685L48.970 471.030C33.851 486.149 8 475.441 8 454.059V320c0-13.255 10.745-24 24-24z"/></svg>
</body></html>
